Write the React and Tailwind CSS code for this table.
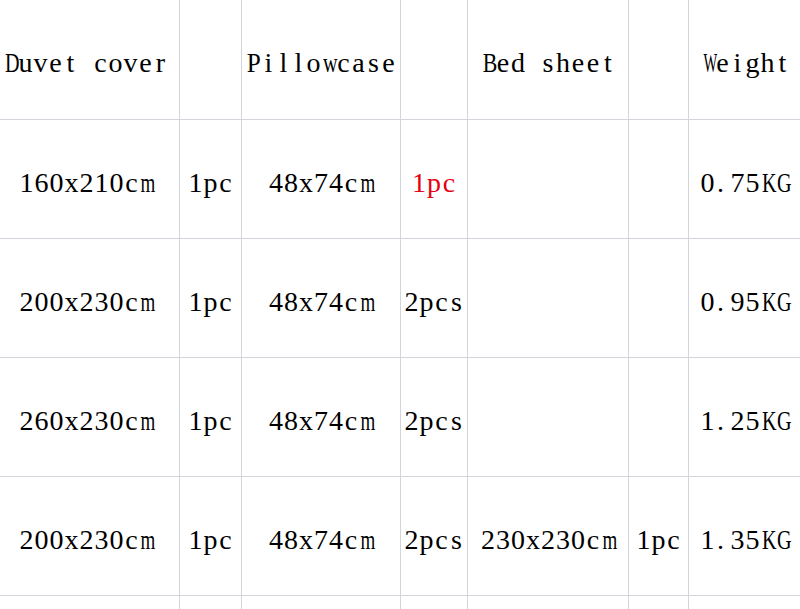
const rows = [
  ["160x210cm", "1pc", "48x74cm", "1pc", "", "", "0.75KG"],
  ["200x230cm", "1pc", "48x74cm", "2pcs", "", "", "0.95KG"],
  ["260x230cm", "1pc", "48x74cm", "2pcs", "", "", "1.25KG"],
  ["200x230cm", "1pc", "48x74cm", "2pcs", "230x230cm", "1pc", "1.35KG"],
  ["", "", "", "", "", "", ""],
]

const header = ["Duvet cover", "", "Pillowcase", "", "Bed sheet", "", "Weight"]

// wide glyphs get squeezed into the fixed half-width slot, like a CJK song font
const squeeze = {
  m: "scale-x-[0.68] -translate-x-[1px]",
  w: "scale-x-[0.72]",
  K: "scale-x-[0.72]",
  G: "scale-x-[0.72]",
  D: "scale-x-[0.72]",
  P: "scale-x-[0.9]",
  W: "scale-x-[0.52]",
  B: "scale-x-[0.78]",
  ".": "!text-left pl-[2px]",
}

function Mono({ text }) {
  return (
    <span className="inline-flex">
      {text.split("").map((ch, i) => (
        <span key={i} className={`inline-block w-[15px] text-center ${squeeze[ch] || ""}`}>
          {ch === " " ? "\u00a0" : ch}
        </span>
      ))}
    </span>
  )
}

function Cell({ children, last, red, className = "" }) {
  return (
    <div
      className={`flex items-center justify-center border-b border-[#d4d4dc] whitespace-nowrap ${last ? "" : "border-r"} ${red ? "text-[#e60012]" : "text-black"} ${className}`}
    >
      {children}
    </div>
  )
}

export default function App() {
  return (
    <div className="w-[800px] h-[609px] overflow-hidden bg-white font-['Liberation_Serif',serif] text-[28px] leading-none">
      <div className="grid grid-cols-[180px_62px_159px_67px_161px_60px_112px] grid-rows-[120px_119px_119px_119px_119px_119px]">
        {header.map((h, i) => (
          <Cell key={i} last={i === 6} className={i === 0 ? "justify-start pl-[3px] pt-[6px]" : "pt-[6px]"}>
            <Mono text={h} />
          </Cell>
        ))}
        {rows.map((r, ri) =>
          r.map((c, ci) => (
            <Cell
              key={ri + "-" + ci}
              last={ci === 6}
              red={ri === 0 && ci === 3}
              className={ci === 0 ? "pt-[8px] pr-[6px]" : "pt-[8px]"}
            >
              <Mono text={c} />
            </Cell>
          ))
        )}
      </div>
    </div>
  )
}
